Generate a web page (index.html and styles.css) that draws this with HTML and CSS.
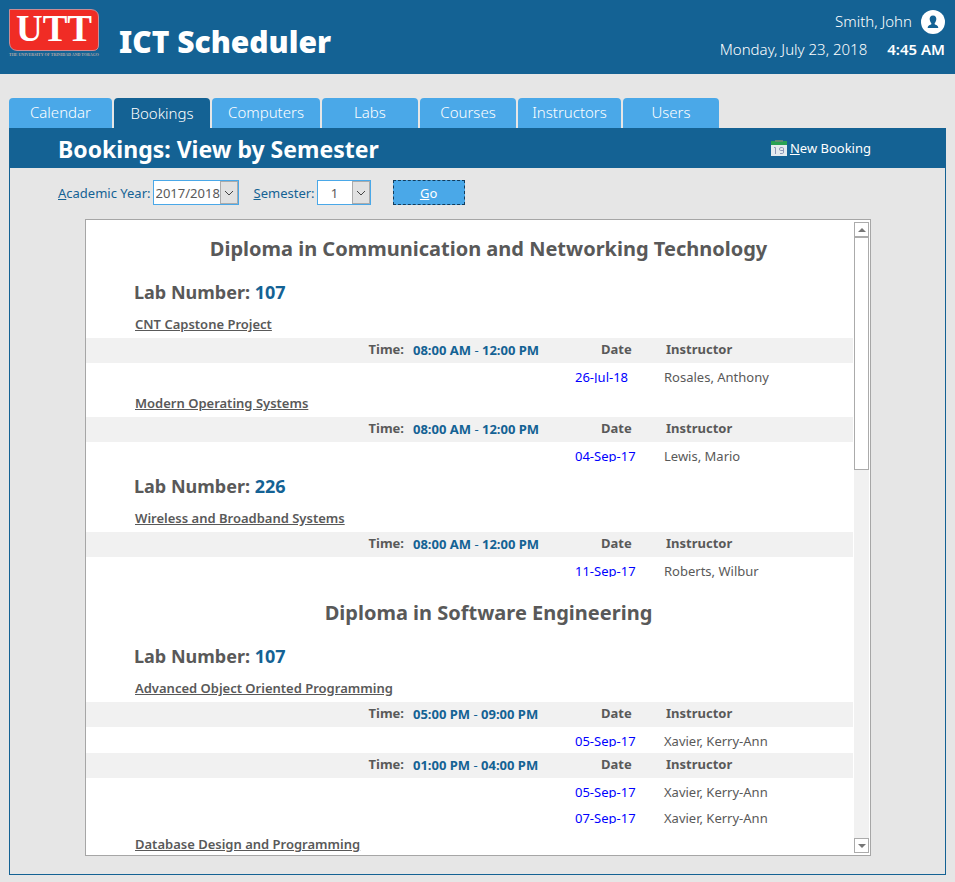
FILE: index.html
```
<!DOCTYPE html>
<html lang="en">
<head>
<meta charset="utf-8">
<title>ICT Scheduler</title>
<link rel="stylesheet" href="styles.css">
</head>
<body>
<header class="masthead">
  <div class="brand">
    <div class="logo">
      <svg class="logo-mark" viewBox="0 0 90 42" role="img" aria-label="University logo">
        <path d="M.5 .5H82Q89.500 1 89.500 8V36Q89.500 41.500 84 41.500H8Q1 41 .5 34V.5Z" fill="#f02c25" stroke="#c98d96"/>
        <text class="logo-text" x="45" y="32" text-anchor="middle">UTT</text>
      </svg>
      <span class="logo-line">THE UNIVERSITY OF TRINIDAD AND TOBAGO</span>
    </div>
    <h1 class="app-title">ICT Scheduler</h1>
  </div>
  <div class="session">
    <div class="user"><span>Smith, John</span>
      <svg class="avatar" viewBox="0 0 24 24" aria-hidden="true"><circle cx="12" cy="12" r="12" fill="#fff"/><path d="M12 5.500c2.400 0 3.600 1.700 3.300 4.100-.2 1.600-.8 2.800-1.600 3.500v1.200c.8.8 3.600.9 3.600 3.700H6.700c0-2.800 2.800-2.900 3.600-3.700v-1.200c-.8-.7-1.400-1.900-1.600-3.500C8.400 7.200 9.600 5.500 12 5.500Z" fill="#146294"/></svg>
    </div>
    <div class="clock"><span>Monday, July 23, 2018</span><strong>4:45 AM</strong></div>
  </div>
</header>
<main class="page">
  <nav class="tabs">
    <a class="tab wide" href="#">Calendar</a>
    <a class="tab current" href="#" aria-current="page">Bookings</a>
    <a class="tab wider" href="#">Computers</a>
    <a class="tab" href="#">Labs</a>
    <a class="tab" href="#">Courses</a>
    <a class="tab wide" href="#">Instructors</a>
    <a class="tab" href="#">Users</a>
  </nav>
  <section class="panel">
    <div class="panel-head">
      <h2 class="panel-title">Bookings: View by Semester</h2>
      <a class="new-booking" href="#">
        <svg class="cal-icon" viewBox="0 0 16 16" aria-hidden="true"><path d="M0 1h16v4H0z" fill="#28a152"/><path d="M4 0h8v2H4z" fill="#5d8a72"/><path d="M0 5h16v11H0z" fill="#e4ebee"/><path d="M3 7.500H4.500V14M12.500 10.500H9.500Q8.500 10.500 8.500 9T10 7.500H11.500Q12.500 7.500 12.500 9V12Q12.500 13.500 11.500 13.500H9" fill="none" stroke="#8e98b8"/></svg>
        <span><u>N</u>ew Booking</span>
      </a>
    </div>
    <form class="filters">
      <label class="filter-label" for="year"><u>A</u>cademic Year:</label>
      <div class="picker year">
        <select id="year"><option>2017/2018</option></select>
        <span class="picker-arrow"><svg viewBox="0 0 10 6" aria-hidden="true"><path d="M1 1L5 5L9 1"/></svg></span>
      </div>
      <label class="filter-label" for="semester"><u>S</u>emester:</label>
      <div class="picker semester">
        <select id="semester"><option>1</option></select>
        <span class="picker-arrow"><svg viewBox="0 0 10 6" aria-hidden="true"><path d="M1 1L5 5L9 1"/></svg></span>
      </div>
      <button class="go" type="button"><u>G</u>o</button>
    </form>
    <div class="report">
      <div class="report-body">
        <section class="program">
          <h3 class="program-title">Diploma in Communication and Networking Technology</h3>
          <h4 class="lab">Lab Number: <span>107</span></h4>
          <h5 class="course">CNT Capstone Project</h5>
          <table class="slot">
            <thead><tr><th class="time-label">Time:</th><th class="time">08:00 AM <i>-</i> 12:00 PM</th><th class="date-head">Date</th><th class="who-head">Instructor</th></tr></thead>
            <tbody><tr><td></td><td></td><td><a class="date" href="#">26-Jul-18</a></td><td>Rosales, Anthony</td></tr></tbody>
          </table>
          <h5 class="course">Modern Operating Systems</h5>
          <table class="slot">
            <thead><tr><th class="time-label">Time:</th><th class="time">08:00 AM <i>-</i> 12:00 PM</th><th class="date-head">Date</th><th class="who-head">Instructor</th></tr></thead>
            <tbody><tr><td></td><td></td><td><a class="date" href="#">04-Sep-17</a></td><td>Lewis, Mario</td></tr></tbody>
          </table>
          <h4 class="lab">Lab Number: <span>226</span></h4>
          <h5 class="course">Wireless and Broadband Systems</h5>
          <table class="slot">
            <thead><tr><th class="time-label">Time:</th><th class="time">08:00 AM <i>-</i> 12:00 PM</th><th class="date-head">Date</th><th class="who-head">Instructor</th></tr></thead>
            <tbody><tr><td></td><td></td><td><a class="date" href="#">11-Sep-17</a></td><td>Roberts, Wilbur</td></tr></tbody>
          </table>
        </section>
        <section class="program">
          <h3 class="program-title">Diploma in Software Engineering</h3>
          <h4 class="lab">Lab Number: <span>107</span></h4>
          <h5 class="course">Advanced Object Oriented Programming</h5>
          <table class="slot">
            <thead><tr><th class="time-label">Time:</th><th class="time">05:00 PM <i>-</i> 09:00 PM</th><th class="date-head">Date</th><th class="who-head">Instructor</th></tr></thead>
            <tbody><tr><td></td><td></td><td><a class="date" href="#">05-Sep-17</a></td><td>Xavier, Kerry-Ann</td></tr></tbody>
          </table>
          <table class="slot">
            <thead><tr><th class="time-label">Time:</th><th class="time">01:00 PM <i>-</i> 04:00 PM</th><th class="date-head">Date</th><th class="who-head">Instructor</th></tr></thead>
            <tbody>
              <tr><td></td><td></td><td><a class="date" href="#">05-Sep-17</a></td><td>Xavier, Kerry-Ann</td></tr>
              <tr><td></td><td></td><td><a class="date" href="#">07-Sep-17</a></td><td>Xavier, Kerry-Ann</td></tr>
            </tbody>
          </table>
          <h5 class="course">Database Design and Programming</h5>
        </section>
      </div>
      <div class="scrollbar">
        <button class="scroll-step" type="button" aria-label="Scroll up"><svg viewBox="0 0 8 4" aria-hidden="true"><path d="M0 4L4 0L8 4Z"/></svg></button>
        <div class="track"><div class="thumb"></div></div>
        <button class="scroll-step" type="button" aria-label="Scroll down"><svg viewBox="0 0 8 4" aria-hidden="true"><path d="M0 0L4 4L8 0Z"/></svg></button>
      </div>
    </div>
  </section>
</main>
</body>
</html>
```
FILE: styles.css
```
* { box-sizing: border-box; }
body {
  margin: 0;
  height: 100vh;
  display: flex;
  flex-direction: column;
  background: #e6e6e6;
  color: #595959;
  font: 13px/20px "Noto Sans", "Open Sans", sans-serif;
}
h1, h2, h3, h4, h5 { margin: 0; }
a { color: inherit; text-decoration: none; }

.masthead {
  flex: none;
  height: 74px;
  padding: 9px 10px 0 9px;
  display: flex;
  justify-content: space-between;
  background: #146294;
  color: #fff;
}
.brand { display: flex; gap: 20px; }
.logo { width: 90px; }
.logo-mark { display: block; width: 90px; height: 42px; }
.logo-text { font: bold 37px "Liberation Serif", serif; fill: #fff; }
.logo-line { display: block; margin-top: 1px; color: #b3a8a8; font: bold 4px/6px "Liberation Serif", serif; white-space: nowrap; }
.app-title { padding-top: 13px; font-size: 30px; line-height: 40px; font-weight: 900; }
.session { text-align: right; font-size: 15px; font-weight: 350; }
.user { display: flex; justify-content: flex-end; align-items: center; gap: 9px; height: 26px; line-height: 24px; }
.user span { height: 26px; }
.avatar { width: 24px; height: 24px; }
.clock { display: flex; justify-content: flex-end; gap: 20px; height: 30px; line-height: 28px; }
.clock strong { font-weight: 600; }

.page { flex: 1; min-height: 0; padding: 24px 9px 7px; display: flex; flex-direction: column; }
.tabs { flex: none; display: flex; gap: 2px; }
.tab {
  width: 96px;
  height: 30px;
  line-height: 28px;
  border-radius: 4px 4px 0 0;
  background: #4aa8e8;
  color: #fff;
  font-size: 15px;
  font-weight: 350;
  text-align: center;
}
.tab.wide { width: 103px; }
.tab.wider { width: 108px; }
.tab.current { background: #146294; line-height: 30px; }

.panel {
  flex: 1;
  min-height: 0;
  display: flex;
  flex-direction: column;
  border: solid #146294;
  border-width: 0 1px 1px;
  padding-bottom: 18px;
}
.panel-head {
  flex: none;
  height: 40px;
  padding: 0 74px 0 48px;
  display: flex;
  justify-content: space-between;
  align-items: center;
  background: #146294;
  color: #fff;
}
.panel-title { padding-top: 2px; font-size: 23px; line-height: 38px; font-weight: 700; }
.new-booking { display: flex; align-items: center; gap: 3px; }
.cal-icon { width: 16px; height: 16px; }

.filters { flex: none; display: flex; align-items: center; padding: 12px 0 14px 48px; height: 51px; color: #146294; }
.picker {
  display: grid;
  grid-template-columns: 1fr 18px;
  height: 25px;
  margin: 0 15px 0 2px;
  border: 1px solid #4aa8e8;
  background: #fff;
}
.picker.year { width: 86px; }
.picker.semester { width: 54px; margin-right: 22px; }
.picker select {
  grid-area: 1 / 1 / 2 / 3;
  appearance: none;
  border: 0;
  padding: 0 18px 0 2px;
  background: transparent;
  color: #595959;
  font: inherit;
}
.picker.semester select { text-align: center; padding-left: 0; }
.picker-arrow {
  grid-area: 1 / 2;
  display: grid;
  place-items: center;
  border: 1px solid #ababab;
  background: #e1e1e1;
  pointer-events: none;
}
.picker-arrow svg { width: 10px; height: 6px; fill: none; stroke: #444; stroke-width: 1; }
.go {
  width: 72px;
  height: 25px;
  padding: 0;
  border: 1px dashed #123c5c;
  background: #4aa8e8;
  color: #fff;
  font: inherit;
}

.report {
  flex: 1;
  min-height: 0;
  margin: 0 74px 0 75px;
  display: flex;
  border: 1px solid #a6a6a6;
  background: #fff;
}
.report-body { flex: 1; min-width: 0; overflow: hidden; }
.program + .program { padding-top: 1px; }
.program-title { height: 54px; padding: 4px 32px 0 70px; font-size: 20px; line-height: 50px; text-align: center; white-space: nowrap; }
.lab { height: 36px; padding-left: 48px; font-size: 18px; line-height: 36px; }
.lab span { color: #146294; }
.course { height: 28px; padding-left: 49px; font-size: 13px; line-height: 28px; font-weight: 600; text-decoration: underline; }
.slot { width: 100%; border-collapse: collapse; table-layout: fixed; }
.slot th { height: 25px; padding: 0; background: #f1f1f1; text-align: left; vertical-align: top; line-height: 22px; }
.slot td { height: 26px; padding: 2px 0 0 4px; vertical-align: top; line-height: 24px; }
.slot .time-label { width: 327px; padding-right: 9px; text-align: right; }
.slot .time { width: 158px; color: #146294; line-height: 24px; }
.time i { font-style: normal; font-weight: 400; }
.slot .date-head { width: 89px; padding-left: 30px; }
.slot .who-head { padding-left: 6px; }
.date { display: block; height: 18px; overflow: hidden; color: #00f; }

.scrollbar { flex: none; width: 17px; padding: 2px 1px; display: flex; flex-direction: column; }
.scroll-step {
  flex: none;
  width: 15px;
  height: 15px;
  padding: 0;
  display: grid;
  place-items: center;
  border: 1px solid #ababab;
  background: #fff;
}
.scroll-step svg { width: 8px; height: 4px; fill: #777; }
.track { flex: 1; background: #f1f1f1; }
.thumb { height: 233px; border: 1px solid #ababab; background: #fff; }
```
